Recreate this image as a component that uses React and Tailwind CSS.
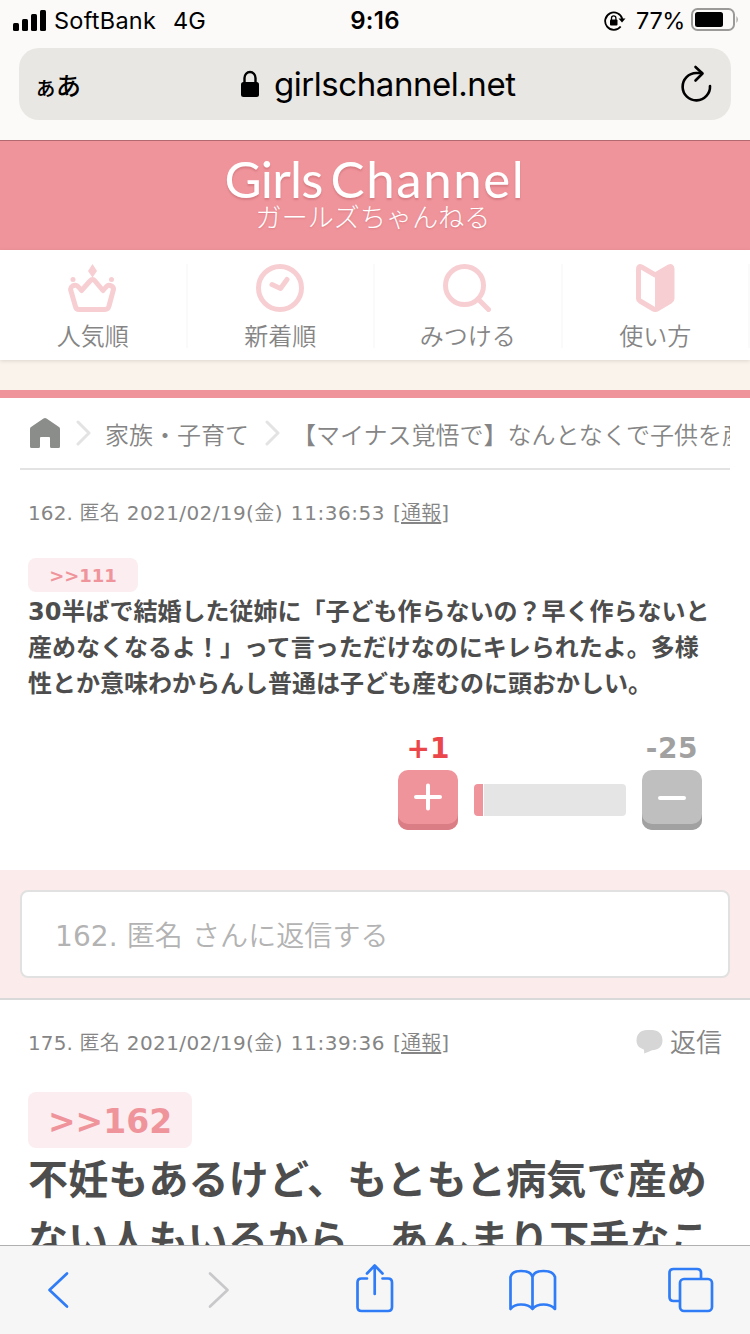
import React from "react";

const PinkCrown = () => (
  <svg width="48" height="48" viewBox="0 0 48 48" fill="none" className="-ml-px shrink-0">
    <path d="M4.500 22 C8 20 9.500 21.500 13.500 26.500 L22 17 Q24.500 14 27 17 L35 26.500 C39 21.500 40 20 43.500 22 Q46 23.500 45.300 26 L41 42 Q40.200 45.500 37 45.500 H11 Q8 45.500 7.300 42 L2.700 26 Q2.200 23.500 4.500 22 Z" stroke="#f7ced2" strokeWidth="5" strokeLinejoin="round" />
    <path d="M24.500 0 L29 7 L24.500 13.500 L20 7 Z" fill="#f7ced2" />
    <circle cx="5" cy="15.500" r="2.500" fill="#f7ced2" />
    <circle cx="43.500" cy="15.500" r="2.500" fill="#f7ced2" />
  </svg>
);

const PinkClock = () => (
  <svg width="48" height="48" viewBox="0 0 48 48" fill="none" stroke="#f7ced2" strokeWidth="5" className="-ml-px shrink-0">
    <circle cx="24" cy="24" r="21.500" />
    <path d="M16 20.500 L24.500 24.500 L31 15.500" strokeLinecap="round" strokeLinejoin="round" />
  </svg>
);

const PinkSearch = () => (
  <svg width="48" height="48" viewBox="0 0 48 48" fill="none" stroke="#f7ced2" strokeWidth="5" className="-ml-px shrink-0">
    <circle cx="21.500" cy="21.500" r="19" />
    <path d="M35 35 L45.500 45.500" strokeLinecap="round" />
  </svg>
);

const PinkBeginner = () => (
  <svg width="48" height="48" viewBox="0 0 48 48" className="-ml-px shrink-0">
    <path d="M7.500 5 Q7.500 1.500 10.500 3 L24.300 11 L38 3 Q41 1.500 41 5 V34.500 Q41 36 39.500 37 L26 45 Q24.300 46 22.500 45 L9 37 Q7.500 36 7.500 34.500 Z" fill="none" stroke="#f7ced2" strokeWidth="5" strokeLinejoin="round" />
    <path d="M24 11 L40 3 V36 L24 45 Z" fill="#f7ced2" />
  </svg>
);

const NAV = [
  { label: "人気順", Icon: PinkCrown },
  { label: "新着順", Icon: PinkClock },
  { label: "みつける", Icon: PinkSearch },
  { label: "使い方", Icon: PinkBeginner },
];

function StatusBar() {
  return (
    <div className="flex h-12 items-start pt-[5px] text-[23.5px] leading-[32px]">
      <div className="flex w-[300px] items-center pl-[13px]">
        <svg width="33" height="21" viewBox="0 0 33 21" className="mr-2 -mt-0.5">
          <rect x="0" y="13" width="6" height="8" rx="1.500" />
          <rect x="9" y="9" width="6" height="12" rx="1.500" />
          <rect x="18" y="4" width="6" height="17" rx="1.500" />
          <rect x="27" y="0" width="6" height="21" rx="1.500" />
        </svg>
        <span className="tracking-[0.25px]">SoftBank</span>
        <span className="ml-[17px]">4G</span>
      </div>
      <div className="w-[150px] text-center text-[24px] font-semibold tracking-[0.3px]">9:16</div>
      <div className="flex flex-1 items-center justify-end pr-[11px]">
        <svg width="22" height="22" viewBox="0 0 22 22" className="mr-[10px]">
          <path d="M16.700 16.500 A8.700 8.700 0 1 1 18.300 9" fill="none" stroke="#000" strokeWidth="1.800" />
          <path d="M14.500 8.500 H21.500 L18 12.500 Z" />
          <rect x="6" y="9.500" width="7.500" height="6" rx="1" />
          <path d="M7.500 10 V8 a2.200 2.200 0 0 1 4.400 0 V10" fill="none" stroke="#000" strokeWidth="1.300" />
        </svg>
        <span className="mr-[6px] tracking-[-0.4px]">77%</span>
        <svg width="48" height="24" viewBox="0 0 48 24" className="-mt-0.5">
          <rect x="1" y="1" width="42" height="21" rx="5.500" fill="none" stroke="#9b9a98" strokeWidth="2" />
          <rect x="4" y="4" width="28" height="15" rx="2.500" />
          <path d="M45.500 8 Q48 11.500 45.500 15 Z" fill="#9b9a98" />
        </svg>
      </div>
    </div>
  );
}

function AddressBar() {
  return (
    <div className="mx-[19px] flex h-[72px] items-center rounded-[20px] bg-[#e8e7e3]">
      <div className="flex w-[221px] items-baseline pl-[15px] font-['Noto_Sans_CJK_JP',sans-serif] font-medium">
        <span className="text-[23px] leading-none">ぁ</span>
        <span className="-ml-px text-[25px] leading-none">あ</span>
      </div>
      <svg width="20" height="28" viewBox="0 0 20 28" className="shrink-0">
        <rect x="1" y="12" width="18" height="15" rx="2.500" />
        <path d="M4.500 13 V8 a5.500 6 0 0 1 11 0 V13" fill="none" stroke="#000" strokeWidth="2.400" />
      </svg>
      <div className="ml-[14px] w-[406px] shrink-0 text-[33px] leading-[40px] tracking-[-0.45px]">girlschannel.net</div>
      <svg width="32" height="38" viewBox="0 0 32 38" fill="none" stroke="#000" strokeWidth="2.600" strokeLinecap="round" strokeLinejoin="round" className="shrink-0">
        <path d="M30 21 A13.700 13.700 0 1 1 16.300 8 L22 8" />
        <path d="M15.500 2 L22.500 8.500 L15.500 15.500" />
      </svg>
    </div>
  );
}

function SiteHeader() {
  return (
    <header className="flex h-[110px] flex-col items-center border-t border-[#b26970] bg-[#f0949b] text-white">
      <div className="mt-[16px] flex h-[46px] gap-[8px] whitespace-nowrap font-['Lato',sans-serif] text-[51px] font-normal leading-[44px] [text-shadow:0_2px_2px_rgba(170,80,90,0.35)]">
        <span className="tracking-[-0.8px]">Girls</span>
        <span className="tracking-[1.6px]">Channel</span>
      </div>
      <div className="-ml-1 mt-px whitespace-nowrap font-['Noto_Sans_CJK_JP',sans-serif] text-[26px] font-light leading-[24px] tracking-[0.1px] [text-shadow:0_1px_2px_rgba(170,80,90,0.3)]">
        ガールズちゃんねる
      </div>
    </header>
  );
}

function SiteNav() {
  return (
    <nav className="relative flex h-[110px] bg-white pt-[14px] shadow-[0_1px_4px_rgba(0,0,0,0.12)]">
      {NAV.map(({ label, Icon }) => (
        <div key={label} className="flex h-[84px] flex-1 flex-col items-center border-r-2 border-[#fafafa]">
          <Icon />
          <span className="mt-[7px] text-[24px] leading-[36px]">{label}</span>
        </div>
      ))}
    </nav>
  );
}

const Chevron = ({ className }) => (
  <svg width="16" height="26" viewBox="0 0 16 26" fill="none" stroke="#e3e3e3" strokeWidth="3" strokeLinecap="round" strokeLinejoin="round" className={className}>
    <path d="M2 2 L13 13 L2 24" />
  </svg>
);

function Breadcrumb() {
  return (
    <div className="mx-5 flex h-[72px] items-center overflow-hidden whitespace-nowrap border-b-2 border-[#e3e3e3] pl-2.5 text-[24px]">
      <svg width="30" height="30" viewBox="0 0 30 30" className="shrink-0">
        <path d="M13.500 0.500 Q15 -0.500 16.500 0.500 L29 9 Q30 9.700 30 11 V28.500 Q30 30 28.500 30 H21.500 Q20 30 20 28.500 V20 Q20 19 19 19 H11 Q10 19 10 20 V28.500 Q10 30 8.500 30 H1.500 Q0 30 0 28.500 V11 Q0 9.700 1 9 Z" fill="#8a8d8a" />
      </svg>
      <Chevron className="ml-4 shrink-0" />
      <span className="ml-[13px] pt-[5px]">家族・子育て</span>
      <Chevron className="ml-[16px] shrink-0" />
      <span className="ml-[11px] pt-[5px]">【マイナス覚悟で】なんとなくで子供を産んだ人</span>
    </div>
  );
}

const Kanji = ({ children }) => <span className="font-[350]">{children}</span>;

function Meta({ id, time }) {
  return (
    <div className="flex whitespace-nowrap text-[20px] font-normal leading-[30px] tracking-[0.12px]">
      <span>{id}. <Kanji>匿名</Kanji></span>
      <span className="ml-[7px] tracking-[0.4px]">2021/02/19(<Kanji>金</Kanji>)</span>
      <span className="ml-[8px] tracking-[0.55px]">{time}</span>
      <span className="ml-[8px]">[<span className="font-[350] underline underline-offset-2">通報</span>]</span>
    </div>
  );
}

function VoteRow() {
  return (
    <div className="mt-[27px] flex items-end pl-[370px] text-[28px] font-bold leading-[40px]">
      <div className="w-[60px] text-center">
        <div className="whitespace-nowrap text-[#eb474a]">+1</div>
        <div className="mt-px flex h-[60px] items-center justify-center rounded-[10px] bg-[#f0949b] shadow-[inset_0_-6px_0_#da7d85]">
          <svg width="28" height="28" viewBox="0 0 28 28" stroke="#fff" strokeWidth="4" strokeLinecap="round" className="-mt-[7px]">
            <path d="M2 14 H26 M14 2.500 V25.500" />
          </svg>
        </div>
      </div>
      <div className="mx-4 mb-[14px] flex h-8 w-[152px] gap-px overflow-hidden rounded">
        <div className="w-[9px] bg-[#f0949b]" />
        <div className="flex-1 bg-[#e5e5e5]" />
      </div>
      <div className="w-[60px] text-center">
        <div className="whitespace-nowrap tracking-[0.6px] text-[#a1a1a1]">-25</div>
        <div className="mt-px flex h-[60px] items-center justify-center rounded-[10px] bg-[#bfbfbf] shadow-[inset_0_-6px_0_#a1a1a1]">
          <svg width="28" height="28" viewBox="0 0 28 28" stroke="#fff" strokeWidth="4" strokeLinecap="round" className="-mt-1">
            <path d="M2 14 H26" />
          </svg>
        </div>
      </div>
    </div>
  );
}

function Toolbar() {
  return (
    <div className="relative flex h-[89px] shrink-0 items-start border-t border-[#b0b0b0] bg-[#f6f6f7] pt-[17px]">
      <svg width="750" height="56" viewBox="0 0 750 56" fill="none" stroke="#2f7cf6" strokeWidth="2.700" strokeLinecap="round" strokeLinejoin="round">
        <path d="M67 10.500 L49.500 27 L67 43.500" />
        <path d="M210 10.500 L227.500 27 L210 43.500" stroke="#c8c8ca" />
        <path d="M367 15.500 H361.500 Q357.500 15.500 357.500 19.500 V44 Q357.500 48 361.500 48 H388 Q392 48 392 44 V19.500 Q392 15.500 388 15.500 H382.500 M374.700 31 V2.500 M367 10.500 L374.700 2.500 L382.500 10.500" />
        <path d="M510.500 46 V14 Q512 8 521 8 Q531 8 532.500 14 Q534 8 543.500 8 Q553 8 555 14 V46 Q551 41.500 543.500 41.500 Q536 41.500 532.500 46 Q529 41.500 521 41.500 Q514 41.500 510.500 46 Z M532.500 14 V46" />
        <path d="M679 38 H673.500 Q669.500 38 669.500 34 V10 Q669.500 6 673.500 6 H697 Q701 6 701 10 V15.500" />
        <rect x="680" y="16" width="32" height="32" rx="4" />
      </svg>
    </div>
  );
}

export default function App() {
  return (
    <div className="flex h-[1334px] w-[750px] flex-col overflow-hidden bg-white font-['DejaVu_Sans','Noto_Sans_CJK_JP',sans-serif] text-[#858585]">
      <div className="h-[140px] shrink-0 bg-[#fbfaf8] font-['Inter',sans-serif] text-black">
        <StatusBar />
        <AddressBar />
      </div>
      <main className="min-h-0 flex-1 overflow-hidden font-[350]">
        <SiteHeader />
        <SiteNav />
        <div className="h-[38px] border-b-8 border-[#f0949b] bg-[#faf3eb]" />
        <Breadcrumb />
        <article className="h-[400px] px-7 pt-[28px]">
          <Meta id="162" time="11:36:53" />
          <div className="mt-[30px] flex h-[34px] w-[110px] items-center justify-center rounded-lg bg-[#fbedf0] text-[18px] font-bold text-[#f0949b]">&gt;&gt;111</div>
          <div className="mt-0.5 whitespace-nowrap text-[24px] font-bold leading-[36px] text-[#4d4d4d]">
            <p>30半ばで結婚した従姉に「子ども作らないの？早く作らないと</p>
            <p>産めなくなるよ！」って言っただけなのにキレられたよ。多様</p>
            <p>性とか意味わからんし普通は子ども産むのに頭おかしい。</p>
          </div>
          <VoteRow />
        </article>
        <div className="h-[130px] border-b-2 border-[#d9d9d9] bg-[#fbebeb] px-5 pt-5">
          <div className="flex h-[88px] items-center rounded-lg border-2 border-[#e1e1e1] bg-white pl-[33px] text-[28px] tracking-[0.1px] text-[#b3b3b3]">
            <div className="pt-[5px]">
              <span className="font-normal">162. </span>匿名 さんに返信する
            </div>
          </div>
        </div>
        <article className="px-7 pt-[28px]">
          <div className="flex justify-between">
            <Meta id="175" time="11:39:36" />
            <div className="flex h-[30px] items-center text-[26px]">
              <svg width="28" height="24" viewBox="0 0 28 24" className="-mt-0.5 mr-1.5">
                <path d="M11 0 H16 C22 0 26.500 4 26.500 10.500 C26.500 17 22 20 16 20.200 Q12 22 8 23.500 Q8.500 21.500 7.800 19.500 C3 18 0.500 15 0.500 10.500 C0.500 4 5 0 11 0 Z" fill="#d6d6d6" />
              </svg>
              <span>返信</span>
            </div>
          </div>
          <div className="mt-[34px] flex h-[56px] w-[164px] items-center justify-center rounded-lg bg-[#fbedf0] pt-[3px] text-[33px] font-bold text-[#f0949b]">&gt;&gt;162</div>
          <div className="mt-0.5 whitespace-nowrap text-[40px] font-bold leading-[60px] tracking-[0.15px] text-[#4d4d4d]">
            <p>不妊もあるけど、もともと病気で産め</p>
            <p>ない人もいるから、あんまり下手なこ</p>
          </div>
        </article>
      </main>
      <Toolbar />
    </div>
  );
}
